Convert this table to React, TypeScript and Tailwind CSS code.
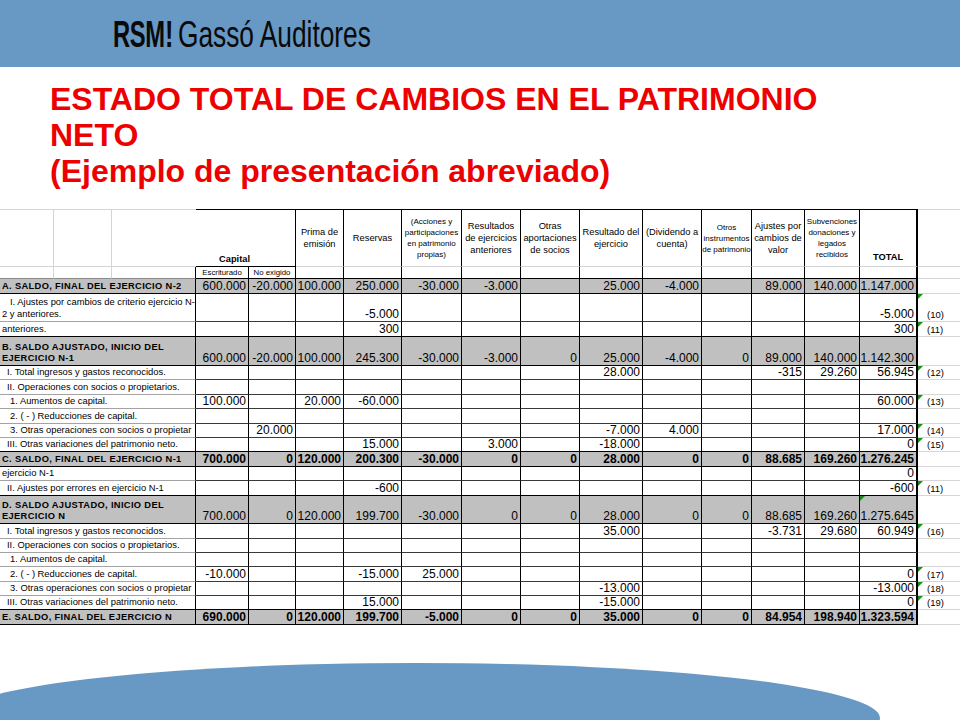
import type { ReactNode } from "react";

type Kind = "white" | "gray" | "grayBold";

interface Row {
  label: ReactNode;
  pad: string;
  kind: Kind;
  v: string[];
  note?: string;
  flag?: boolean;
  flagTotal?: boolean;
}

const e = "";

const ROWS: Row[] = [
  {
    label: "A. SALDO, FINAL DEL EJERCICIO N-2",
    pad: "pl-[2px]",
    kind: "gray",
    v: ["600.000", "-20.000", "100.000", "250.000", "-30.000", "-3.000", e, "25.000", "-4.000", e, "89.000", "140.000", "1.147.000"],
  },
  {
    label: (
      <>
        <span className="pl-[8px]">I. Ajustes por cambios de criterio ejercicio N-</span>
        <br />
        2 y anteriores.
      </>
    ),
    pad: "pl-[2px]",
    kind: "white",
    v: [e, e, e, "-5.000", e, e, e, e, e, e, e, e, "-5.000"],
    note: "(10)",
    flag: true,
  },
  {
    label: "anteriores.",
    pad: "pl-[2px]",
    kind: "white",
    v: [e, e, e, "300", e, e, e, e, e, e, e, e, "300"],
    note: "(11)",
    flag: true,
  },
  {
    label: (
      <>
        B. SALDO AJUSTADO, INICIO DEL
        <br />
        EJERCICIO N-1
      </>
    ),
    pad: "pl-[2px]",
    kind: "gray",
    v: ["600.000", "-20.000", "100.000", "245.300", "-30.000", "-3.000", "0", "25.000", "-4.000", "0", "89.000", "140.000", "1.142.300"],
  },
  {
    label: "I. Total ingresos y gastos reconocidos.",
    pad: "pl-[7px]",
    kind: "white",
    v: [e, e, e, e, e, e, e, "28.000", e, e, "-315", "29.260", "56.945"],
    note: "(12)",
    flag: true,
  },
  {
    label: "II. Operaciones con socios o propietarios.",
    pad: "pl-[7px]",
    kind: "white",
    v: [e, e, e, e, e, e, e, e, e, e, e, e, e],
  },
  {
    label: "1. Aumentos de capital.",
    pad: "pl-[10px]",
    kind: "white",
    v: ["100.000", e, "20.000", "-60.000", e, e, e, e, e, e, e, e, "60.000"],
    note: "(13)",
    flag: true,
  },
  {
    label: "2. ( - ) Reducciones de capital.",
    pad: "pl-[10px]",
    kind: "white",
    v: [e, e, e, e, e, e, e, e, e, e, e, e, e],
  },
  {
    label: "3. Otras operaciones con socios o propietar",
    pad: "pl-[10px]",
    kind: "white",
    v: [e, "20.000", e, e, e, e, e, "-7.000", "4.000", e, e, e, "17.000"],
    note: "(14)",
    flag: true,
  },
  {
    label: "III. Otras variaciones del patrimonio neto.",
    pad: "pl-[7px]",
    kind: "white",
    v: [e, e, e, "15.000", e, "3.000", e, "-18.000", e, e, e, e, "0"],
    note: "(15)",
    flag: true,
  },
  {
    label: "C. SALDO, FINAL DEL EJERCICIO N-1",
    pad: "pl-[2px]",
    kind: "grayBold",
    v: ["700.000", "0", "120.000", "200.300", "-30.000", "0", "0", "28.000", "0", "0", "88.685", "169.260", "1.276.245"],
  },
  {
    label: "ejercicio N-1",
    pad: "pl-[2px]",
    kind: "white",
    v: [e, e, e, e, e, e, e, e, e, e, e, e, "0"],
  },
  {
    label: "II. Ajustes por errores en ejercicio N-1",
    pad: "pl-[7px]",
    kind: "white",
    v: [e, e, e, "-600", e, e, e, e, e, e, e, e, "-600"],
    note: "(11)",
    flag: true,
  },
  {
    label: (
      <>
        D. SALDO AJUSTADO, INICIO DEL
        <br />
        EJERCICIO N
      </>
    ),
    pad: "pl-[2px]",
    kind: "gray",
    v: ["700.000", "0", "120.000", "199.700", "-30.000", "0", "0", "28.000", "0", "0", "88.685", "169.260", "1.275.645"],
    flagTotal: true,
  },
  {
    label: "I. Total ingresos y gastos reconocidos.",
    pad: "pl-[7px]",
    kind: "white",
    v: [e, e, e, e, e, e, e, "35.000", e, e, "-3.731", "29.680", "60.949"],
    note: "(16)",
    flag: true,
  },
  {
    label: "II. Operaciones con socios o propietarios.",
    pad: "pl-[7px]",
    kind: "white",
    v: [e, e, e, e, e, e, e, e, e, e, e, e, e],
  },
  {
    label: "1. Aumentos de capital.",
    pad: "pl-[10px]",
    kind: "white",
    v: [e, e, e, e, e, e, e, e, e, e, e, e, e],
  },
  {
    label: "2. ( - ) Reducciones de capital.",
    pad: "pl-[10px]",
    kind: "white",
    v: ["-10.000", e, e, "-15.000", "25.000", e, e, e, e, e, e, e, "0"],
    note: "(17)",
    flag: true,
  },
  {
    label: "3. Otras operaciones con socios o propietar",
    pad: "pl-[10px]",
    kind: "white",
    v: [e, e, e, e, e, e, e, "-13.000", e, e, e, e, "-13.000"],
    note: "(18)",
    flag: true,
  },
  {
    label: "III. Otras variaciones del patrimonio neto.",
    pad: "pl-[7px]",
    kind: "white",
    v: [e, e, e, "15.000", e, e, e, "-15.000", e, e, e, e, "0"],
    note: "(19)",
    flag: true,
  },
  {
    label: "E. SALDO, FINAL DEL EJERCICIO N",
    pad: "pl-[2px]",
    kind: "grayBold",
    v: ["690.000", "0", "120.000", "199.700", "-5.000", "0", "0", "35.000", "0", "0", "84.954", "198.940", "1.323.594"],
  },
];

const HEADS: { text: ReactNode; size: string }[] = [
  { text: <>Prima de<br />emisión</>, size: "text-[9.3px] leading-[12px]" },
  { text: "Reservas", size: "text-[9.3px] leading-[12px]" },
  { text: <>(Acciones y<br />participaciones<br />en patrimonio<br />propias)</>, size: "text-[8px] leading-[11px]" },
  { text: <>Resultados<br />de ejercicios<br />anteriores</>, size: "text-[9.3px] leading-[12px]" },
  { text: <>Otras<br />aportaciones<br />de socios</>, size: "text-[9.3px] leading-[12px]" },
  { text: <>Resultado del<br />ejercicio</>, size: "text-[9.3px] leading-[12px]" },
  { text: <>(Dividendo a<br />cuenta)</>, size: "text-[9.3px] leading-[12px]" },
  { text: <>Otros<br />instrumentos<br />de patrimonio</>, size: "text-[8px] leading-[11px]" },
  { text: <>Ajustes por<br />cambios de<br />valor</>, size: "text-[9.3px] leading-[12px]" },
  { text: <>Subvenciones<br />donaciones y<br />legados<br />recibidos</>, size: "text-[8px] leading-[11px]" },
];

function Flag() {
  return (
    <span className="absolute left-0 top-0 h-0 w-0 border-t-[5px] border-r-[5px] border-t-[#1b8c1b] border-r-transparent" />
  );
}

function Header() {
  return (
    <>
      {/* first header row */}
      <div className="border-t border-r border-b border-[#d4d4d4]" />
      <div className="border-t border-r border-b border-[#d4d4d4]" />
      <div className="border-t border-b border-[#d4d4d4]" />
      <div className="col-span-2 flex items-end justify-center border-t border-r border-b border-black pb-[1px] pr-[22px] text-[9.3px] font-bold leading-[12px]">
        Capital
      </div>
      {HEADS.map((h, i) => (
        <div
          key={i}
          className={`flex items-center justify-center border-t border-r border-b border-t-black border-r-black border-b-[#d4d4d4] text-center ${h.size}`}
        >
          <span>{h.text}</span>
        </div>
      ))}
      <div className="flex items-end justify-center border-t border-r-2 border-b border-t-black border-r-black border-b-[#d4d4d4] pb-[3px] text-[9.3px] font-bold leading-[12px]">
        TOTAL
      </div>
      <div className="border-t border-b border-[#d4d4d4]" />

      {/* second header row */}
      <div className="border-r border-b border-r-[#d4d4d4] border-b-[#8a8a8a]" />
      <div className="border-r border-b border-r-[#d4d4d4] border-b-[#8a8a8a]" />
      <div className="border-r border-b border-r-black border-b-[#8a8a8a]" />
      <div className="flex items-center justify-center border-r border-b border-black text-[7.8px] leading-[10px]">
        Escriturado
      </div>
      <div className="flex items-center justify-center border-r border-b border-black text-[7.8px] leading-[10px]">
        No exigido
      </div>
      {HEADS.map((_, i) => (
        <div key={i} className="border-r border-b border-black" />
      ))}
      <div className="border-r-2 border-b border-black" />
      <div className="border-b border-[#d4d4d4]" />
    </>
  );
}

function DataRow({ row, nextGray }: { row: Row; nextGray: boolean }) {
  const gray = row.kind !== "white";
  const lineB = gray || nextGray ? "border-b-black" : "border-b-[#3a3a3a]";
  const labelB = gray || nextGray ? "border-b-black" : "border-b-[#a3a3a3]";
  const bg = gray ? "bg-[#c0c0c0]" : "bg-white";
  const numFont = row.kind === "grayBold" ? "font-bold" : "font-normal";

  return (
    <>
      <div
        className={`col-span-3 flex items-end overflow-hidden whitespace-nowrap border-r border-b border-r-black pb-[1px] ${labelB} ${bg} ${row.pad} ${
          gray ? "text-[9.3px] font-bold leading-[11px] tracking-[0.35px]" : "text-[9.4px] leading-[12px]"
        }`}
      >
        <span>{row.label}</span>
      </div>
      {row.v.map((val, i) => (
        <div
          key={i}
          className={`relative flex items-end justify-end border-b border-r-black pr-[2px] text-[12px] leading-[13px] ${
            i === 12 ? "border-r-2" : "border-r"
          } ${lineB} ${bg} ${numFont}`}
        >
          {i === 12 && row.flagTotal && <Flag />}
          {val}
        </div>
      ))}
      <div className="relative flex items-end border-b border-[#d6d6d6] pb-[1px] pl-[9px] text-[9.5px] leading-[11px]">
        {row.flag && <Flag />}
        {row.note}
      </div>
    </>
  );
}

export default function App() {
  return (
    <div className="relative flex h-[720px] w-[960px] flex-col overflow-hidden bg-white">
      {/* top band with logo */}
      <div className="flex h-[67px] shrink-0 items-center bg-[#6898c4] pl-[113px] pt-[2px] font-['Liberation_Sans',Arial,sans-serif] text-[36px] leading-none text-[#0a0a0a]">
        <span className="inline-block w-[52px] whitespace-nowrap">
          <span className="inline-block origin-left scale-x-[0.66] font-bold tracking-[-0.5px]">RSM</span>
        </span>
        <span className="inline-block w-[13px] whitespace-nowrap">
          <span className="inline-block origin-left scale-x-[0.7] font-bold">!</span>
        </span>
        <span className="inline-block w-[194px] whitespace-nowrap">
          <span className="inline-block origin-left scale-x-[0.73]">Gassó Auditores</span>
        </span>
      </div>

      {/* title */}
      <div className="pl-[50px] pt-[14px] font-['Liberation_Sans',Arial,sans-serif] text-[32px] font-bold leading-[36px] text-[#ee0000]">
        ESTADO TOTAL DE CAMBIOS EN EL PATRIMONIO
        <br />
        NETO
        <br />
        (Ejemplo de presentación abreviado)
      </div>

      {/* statement table */}
      <div className="mt-[20px] grid grid-cols-[54px_58px_84px_53px_47px_48px_58px_60px_59px_59px_63px_59px_50px_53px_55px_58px_42px] grid-rows-[58px_12px_15px_28px_15px_29px_14px_15px_14px_15px_14px_14px_15px_14px_15px_28px_15px_14px_14px_15px_14px_14px_15px] font-['Liberation_Sans',Arial,sans-serif] text-black">
        <Header />
        {ROWS.map((row, i) => (
          <DataRow key={i} row={row} nextGray={i + 1 < ROWS.length && ROWS[i + 1].kind !== "white"} />
        ))}
      </div>

      {/* bottom decorative arc */}
      <svg className="mt-auto block shrink-0" width="960" height="95" viewBox="0 625 960 95">
        <ellipse cx="416" cy="718" rx="464" ry="55" fill="#6898c4" />
      </svg>
    </div>
  );
}
